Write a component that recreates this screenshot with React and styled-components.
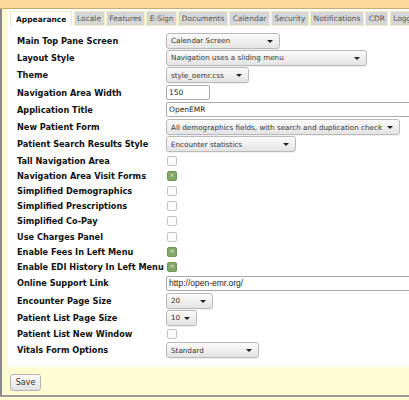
import styled, { createGlobalStyle } from "styled-components";

const Global = createGlobalStyle`
  html, body {
    margin: 0;
    padding: 0;
    overflow: hidden;
    background: #fffbd2;
    font-family: "DejaVu Sans", Verdana, sans-serif;
  }
`;

const TopBand = styled.div`
  height: 8px;
  background: #fcda9a;
  border-bottom: 1px solid #c9ab70;
`;

const Frame = styled.div`
  border-left: 2px solid #8a8a8a;
  background: #fffbd2;
  padding-left: 6px;
  height: 388px;
  border-bottom: 2px solid #9a9a9a;
  box-sizing: border-box;
`;

const Panel = styled.div`
  background: #fff;
  width: 520px;
  padding-top: 2px;
  padding-bottom: 8px;
`;

const Tabs = styled.div`
  display: flex;
  gap: 1.2px;
  padding-left: 2px;
  height: 15px;
`;

const Tab = styled.div`
  display: flex;
  align-items: center;
  padding: 0 ${(p) => (p.$active ? "5px" : "2.5px")};
  font-size: 7.5px;
  white-space: nowrap;
  border: 1px solid #efeac6;
  background: ${(p) => (p.$active ? "#fff" : "#d6d6d6")};
  color: ${(p) => (p.$active ? "#111" : "#555")};
  font-weight: ${(p) => (p.$active ? "bold" : "normal")};
  border-bottom: ${(p) => (p.$active ? "none" : "1px solid #efeac6")};
`;

const Form = styled.div`
  padding: 6px 0 0 9px;
`;

const Row = styled.div`
  display: flex;
  align-items: center;
  height: ${(p) => (p.$check ? "15.2px" : "17.3px")};
`;

const Label = styled.div`
  width: 149px;
  flex: none;
  font-size: 8.2px;
  font-weight: bold;
  color: #111;
  white-space: nowrap;
`;

const SelectBox = styled.div`
  position: relative;
  box-sizing: border-box;
  width: ${(p) => p.$w}px;
  height: 16px;
  display: flex;
  align-items: center;
  padding-left: 4px;
  font-size: 7.2px;
  color: #333;
  white-space: nowrap;
  overflow: hidden;
  border: 1px solid #b9b9b9;
  border-radius: 3px;
  background: linear-gradient(#fbfbfb, #e3e3e3);
  box-shadow: 0 1px 0 rgba(0, 0, 0, 0.06);

  &::after {
    content: "";
    position: absolute;
    right: 6px;
    top: 6px;
    border-left: 3px solid transparent;
    border-right: 3px solid transparent;
    border-top: 3px solid #222;
  }
`;

const TextInput = styled.div`
  box-sizing: border-box;
  width: ${(p) => p.$w}px;
  height: 15px;
  display: flex;
  align-items: center;
  padding-left: 2px;
  font-size: ${(p) => (p.$narrow ? "8.5px" : "7.5px")};
  font-family: ${(p) =>
    p.$narrow ? '"Liberation Sans", Arial, sans-serif' : "inherit"};
  color: #222;
  white-space: nowrap;
  border: 1px solid #aaa;
  border-radius: 2px;
  background: #fff;
`;

const Check = styled.span`
  box-sizing: border-box;
  width: 10px;
  height: 10px;
  margin-left: 1px;
  border-radius: 2px;
  display: flex;
  align-items: center;
  justify-content: center;
  border: 1px solid ${(p) => (p.$on ? "#6f9655" : "#c4c4c4")};
  background: ${(p) => (p.$on ? "#85a86a" : "#fbfbfb")};
  font-size: 5px;
  line-height: 1;
  color: #eef5e6;
`;

const Footer = styled.div`
  padding: 7px 0 0 2px;
`;

const Button = styled.div`
  box-sizing: border-box;
  width: 31px;
  height: 17px;
  display: flex;
  align-items: center;
  justify-content: center;
  font-size: 8px;
  color: #333;
  border: 1px solid #b4b4b4;
  border-radius: 3px;
  background: linear-gradient(#fbfbfb, #e2e2e2);
`;

const tabs = [
  "Appearance",
  "Locale",
  "Features",
  "E-Sign",
  "Documents",
  "Calendar",
  "Security",
  "Notifications",
  "CDR",
  "Logging",
];

const fields = [
  { label: "Main Top Pane Screen", type: "select", value: "Calendar Screen", w: 114 },
  { label: "Layout Style", type: "select", value: "Navigation uses a sliding menu", w: 201 },
  { label: "Theme", type: "select", value: "style_oemr.css", w: 83 },
  { label: "Navigation Area Width", type: "input", value: "150", w: 44 },
  { label: "Application Title", type: "input", value: "OpenEMR", w: 300 },
  {
    label: "New Patient Form",
    type: "select",
    value: "All demographics fields, with search and duplication check",
    w: 234,
  },
  { label: "Patient Search Results Style", type: "select", value: "Encounter statistics", w: 130 },
  { label: "Tall Navigation Area", type: "check" },
  { label: "Navigation Area Visit Forms", type: "check", on: true },
  { label: "Simplified Demographics", type: "check" },
  { label: "Simplified Prescriptions", type: "check" },
  { label: "Simplified Co-Pay", type: "check" },
  { label: "Use Charges Panel", type: "check" },
  { label: "Enable Fees In Left Menu", type: "check", on: true },
  { label: "Enable EDI History In Left Menu", type: "check", on: true },
  { label: "Online Support Link", type: "input", value: "http://open-emr.org/", w: 300, narrow: true },
  { label: "Encounter Page Size", type: "select", value: "20", w: 47 },
  { label: "Patient List Page Size", type: "select", value: "10", w: 31 },
  { label: "Patient List New Window", type: "check" },
  { label: "Vitals Form Options", type: "select", value: "Standard", w: 93 },
];

function Control({ f }) {
  if (f.type === "select") return <SelectBox $w={f.w}>{f.value}</SelectBox>;
  if (f.type === "input")
    return (
      <TextInput $w={f.w} $narrow={f.narrow}>
        {f.value}
      </TextInput>
    );
  return <Check $on={f.on}>{f.on ? "✕" : ""}</Check>;
}

export default function App() {
  return (
    <>
      <Global />
      <TopBand />
      <Frame>
        <Panel>
          <Tabs>
            {tabs.map((t, i) => (
              <Tab key={t} $active={i === 0}>
                {t}
              </Tab>
            ))}
          </Tabs>
          <Form>
            {fields.map((f) => (
              <Row key={f.label} $check={f.type === "check"}>
                <Label>{f.label}</Label>
                <Control f={f} />
              </Row>
            ))}
          </Form>
        </Panel>
        <Footer>
          <Button>Save</Button>
        </Footer>
      </Frame>
    </>
  );
}
